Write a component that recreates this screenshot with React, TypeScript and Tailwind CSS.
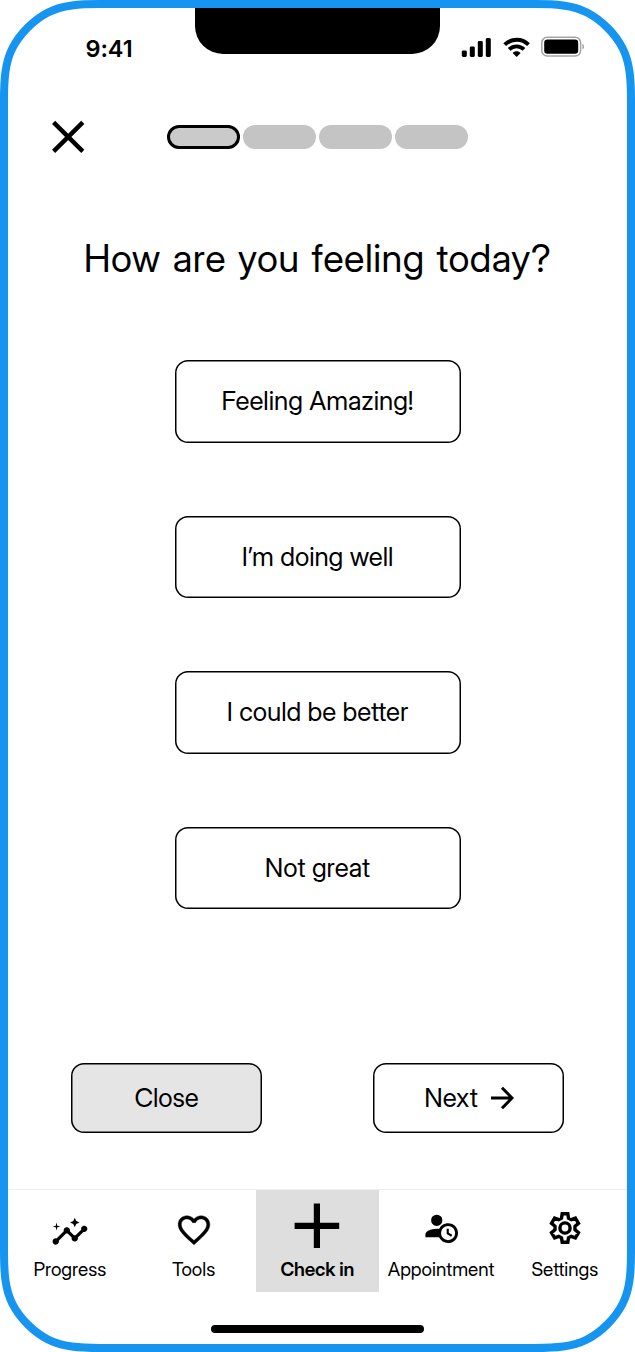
import type { ReactNode } from "react";
import { MdInsights } from "react-icons/md";

function PhoneFrame() {
  return (
    <svg className="pointer-events-none absolute inset-0" width="635" height="1352" viewBox="0 0 635 1352" fill="none" aria-hidden="true">
      <path
        d="M4 100C4 80 5 62.5 12.5 48C20 33.5 33.5 20 48 12.5C62.5 5 80 4 100 4H535C555 4 572.5 5 587 12.5C601.5 20 615 33.5 622.5 48C630 62.5 631 80 631 100V1252C631 1272 630 1289.5 622.5 1304C615 1318.5 601.5 1332 587 1339.5C572.5 1347 555 1348 535 1348H100C80 1348 62.5 1347 48 1339.5C33.5 1332 20 1318.5 12.5 1304C5 1289.5 4 1272 4 1252Z"
        stroke="#1594f0"
        strokeWidth="8"
      />
    </svg>
  );
}

function StatusIcons() {
  return (
    <svg width="124" height="24" viewBox="0 0 124 24" aria-hidden="true">
      <rect x="1.8" y="14.4" width="5" height="6.6" rx="1.4" />
      <rect x="9.8" y="10.4" width="5" height="10.6" rx="1.4" />
      <rect x="17.8" y="5" width="5" height="16" rx="1.4" />
      <rect x="25.8" y="2" width="5" height="19" rx="1.4" />
      <g fill="none" stroke="#000" strokeWidth="3.9">
        <path d="M44.7 8.6C51.5 2.2 61.7 2.2 68.5 8.6" />
        <path d="M49.2 13.4C53.4 9.3 59.8 9.3 64 13.4" />
      </g>
      <path d="M56.6 21L52.6 17C54.8 14.7 58.4 14.7 60.6 17Z" />
      <rect x="81.8" y="1.3" width="38.8" height="18.8" rx="5.4" fill="none" stroke="#a5a5a5" strokeWidth="1.5" />
      <rect x="84.2" y="3.6" width="34" height="14.2" rx="3.2" />
      <path d="M122.4 7.8C124.8 8.8 124.8 12.6 122.4 13.6Z" fill="#a5a5a5" />
    </svg>
  );
}

function Heart() {
  return (
    <svg width="38" height="38" viewBox="0 0 24 24" className="mt-[12px]" aria-hidden="true">
      <path
        stroke="#000"
        strokeWidth="0.25"
        d="M16.5 3c-1.74 0-3.41.81-4.5 2.09C10.91 3.81 9.24 3 7.5 3 4.42 3 2 5.42 2 8.5c0 3.78 3.4 6.86 8.55 11.54L12 21.35l1.45-1.32C18.6 15.36 22 12.28 22 8.5 22 5.42 19.58 3 16.5 3zm-4.4 15.55l-.1.1-.1-.1C7.14 14.24 4 11.39 4 8.5 4 6.5 5.5 5 7.5 5c1.54 0 3.04.99 3.57 2.36h1.87C13.46 5.99 14.96 5 16.5 5c2 0 3.5 1.5 3.5 3.5 0 2.89-3.14 5.74-7.9 10.05z"
      />
    </svg>
  );
}

function AccountClock() {
  return (
    <svg width="34" height="34" viewBox="0 0 24 24" className="mt-[4px]" aria-hidden="true">
      <path d="M10.63,14.1C12.23,10.58 16.38,9.03 19.9,10.63C23.42,12.23 24.97,16.38 23.37,19.9C22.24,22.4 19.75,24 17,24C14.3,24 11.83,22.44 10.67,20H1V18C1.06,16.86 1.84,15.93 3.34,15.18C4.84,14.43 6.72,14.04 9,14C9.57,14 10.11,14.05 10.63,14.1M9,4C10.12,4.03 11.06,4.42 11.81,5.17C12.56,5.92 12.93,6.86 12.93,8C12.93,9.14 12.56,10.08 11.81,10.83C11.06,11.58 10.12,11.95 9,11.95C7.88,11.95 6.94,11.58 6.19,10.83C5.44,10.08 5.07,9.14 5.07,8C5.07,6.86 5.44,5.92 6.19,5.17C6.94,4.42 7.88,4.03 9,4M17,22A5,5 0 0,0 22,17A5,5 0 0,0 17,12A5,5 0 0,0 12,17A5,5 0 0,0 17,22M16,14H17.5V16.82L19.94,18.23L19.19,19.53L16,17.69V14Z" />
    </svg>
  );
}

function Gear() {
  return (
    <svg width="34" height="34" viewBox="0 0 34 34" fill="none" stroke="#000" strokeWidth="3.4" className="mt-[9px]" aria-hidden="true">
      <path d="M14.2 2.7H19.8L20.5 7.2L23.2 8.7L27.4 7.1L30.5 12.3L27 15.3V18.7L30.5 21.7L27.4 26.9L23.2 25.3L20.5 26.8L19.8 31.3H14.2L13.5 26.8L10.8 25.3L6.6 26.9L3.5 21.7L7 18.7V15.3L3.5 12.3L6.6 7.1L10.8 8.7L13.5 7.2Z" />
      <circle cx="17" cy="17" r="5.1" />
    </svg>
  );
}

function Tab({ label, icon, active = false }: { label: string; icon: ReactNode; active?: boolean }) {
  return (
    <button className={active ? "flex h-[102px] w-[123.75px] shrink-0 flex-col items-center bg-[#dedede]" : "flex h-[102px] w-[123.75px] shrink-0 flex-col items-center"}>
      <span className="flex h-[67px] items-center justify-center">{icon}</span>
      <span className={active ? "text-[19px] leading-[26px] font-semibold tracking-[-0.2px] whitespace-nowrap" : "text-[19px] leading-[26px] tracking-[-0.02px] whitespace-nowrap"}>{label}</span>
    </button>
  );
}

const feelings = ["Feeling Amazing!", "I’m doing well", "I could be better", "Not great"];

export default function App() {
  return (
    <div className="relative flex h-[1352px] w-[635px] flex-col overflow-hidden bg-white px-2 pt-2 font-['Inter_Display','Inter','Liberation_Sans',sans-serif] text-black">
      <header className="flex h-[46px] items-start">
        <div className="w-[187px] pt-[26px] pl-[77.5px] font-['Inter','Liberation_Sans',sans-serif] text-[23.5px] leading-[30px] font-semibold tracking-[-0.1px]">9:41</div>
        <div className="h-[46px] w-[245px] rounded-b-[28px] bg-black" />
        <div className="pt-7 pl-5">
          <StatusIcons />
        </div>
      </header>

      <div className="flex items-center pt-[66px] pl-[43px]">
        <button aria-label="Close check in">
          <svg width="34" height="34" viewBox="0 0 34 34" stroke="#000" strokeWidth="4.4" aria-hidden="true">
            <path d="M2.6 2.4L31.8 31.4M31.8 2.4L2.6 31.4" />
          </svg>
        </button>
        <div className="ml-[81.6px] flex gap-[3.2px]">
          <div className="h-6 w-[73px] rounded-full border-3 border-black bg-[#cacaca]" />
          <div className="h-6 w-[73px] rounded-full bg-[#c4c4c4]" />
          <div className="h-6 w-[73px] rounded-full bg-[#c4c4c4]" />
          <div className="h-6 w-[73px] rounded-full bg-[#c4c4c4]" />
        </div>
      </div>

      <h1 className="mt-[80px] text-center text-[38px] leading-[48px] tracking-[0.47px] [word-spacing:1.9px]">How are you feeling today?</h1>

      <div className="mt-[78px] flex flex-col items-center gap-[73px]">
        {feelings.map((f) => (
          <button key={f} className="h-[82.6px] w-[286px] shrink-0 rounded-[13px] pb-px text-[26px] tracking-[-0.05px] shadow-[inset_0_0_0_1.5px_#000]">
            {f}
          </button>
        ))}
      </div>

      <div className="mt-[154px] flex justify-between px-[63px]">
        <button className="h-[70px] w-[191px] rounded-[13px] bg-[#e5e5e5] pb-[2px] text-[26px] tracking-[-0.1px] shadow-[inset_0_0_0_1.5px_#000]">Close</button>
        <button className="flex h-[70px] w-[191px] items-center justify-center gap-3 rounded-[13px] pl-px text-[26px] shadow-[inset_0_0_0_1.5px_#000]">
          <span className="pb-[2px]">Next</span>
          <svg width="24" height="24" viewBox="0 0 24 24" fill="none" stroke="#000" strokeWidth="3" aria-hidden="true">
            <path d="M1 12H22M12 1.8L22 12L12 22.2" />
          </svg>
        </button>
      </div>

      <nav className="mt-[56px] flex border-t border-[#eeeeee]">
        <Tab label="Progress" icon={<MdInsights size={38} className="mt-[17px]" />} />
        <Tab label="Tools" icon={<Heart />} />
        <Tab
          label="Check in"
          active
          icon={
            <svg width="46" height="46" viewBox="0 0 46 46" className="mt-[4px]" aria-hidden="true">
              <path d="M19.8 .5h6.2v19.2h19.2v6.2H26v19.2h-6.2V25.9H.6v-6.2h19.2Z" />
            </svg>
          }
        />
        <Tab label="Appointment" icon={<AccountClock />} />
        <Tab label="Settings" icon={<Gear />} />
      </nav>

      <div className="mt-[33px] h-2 w-[213px] shrink-0 self-center rounded-full bg-black" />
      <PhoneFrame />
    </div>
  );
}
